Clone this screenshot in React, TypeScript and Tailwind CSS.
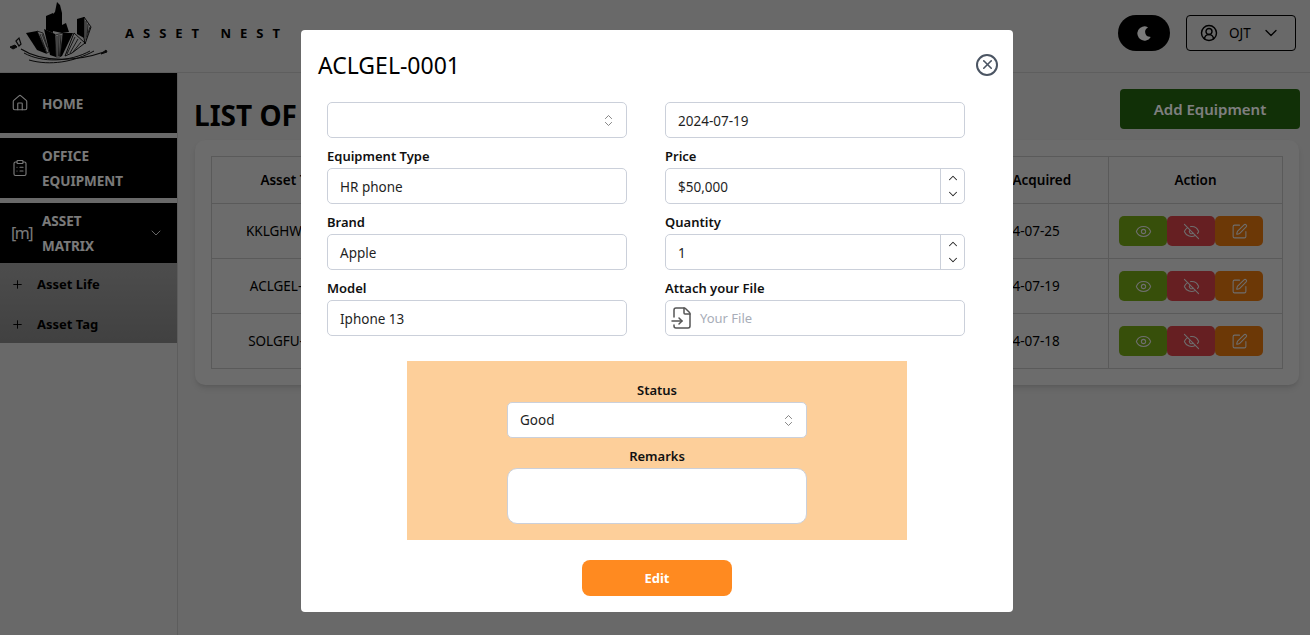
import {
  ChevronDown,
  ChevronUp,
  ChevronsUpDown,
  CircleUserRound,
  ClipboardList,
  Eye,
  EyeOff,
  FileInput,
  House,
  Moon,
  Plus,
  SquarePen,
  X,
} from 'lucide-react'

const rows = [
  { tag: 'KKLGHW-0001', date: '2024-07-25' },
  { tag: 'ACLGEL-0001', date: '2024-07-19' },
  { tag: 'SOLGFU-0001', date: '2024-07-18' },
]

function Logo() {
  return (
    <svg width="120" height="72" viewBox="0 0 120 72" className="shrink-0">
      {/* towers */}
      <path d="M53 31 L53 14 L55 12 L57 2 L60 5 L62 13 L62 33 Z" fill="#000" />
      <path d="M46 30 L46 16 L53 13 L53 33 Z" fill="#000" />
      <path d="M44 29 L55 34 L56 57 L50 55 Z" fill="#000" />
      <path d="M62 33 L62 25 L66 23 L69 32 Z" fill="#000" />
      <path d="M63 33 L73 33 L62 56 L60 57 Z" fill="#000" />
      <path d="M26 33 L37 31 L47 54 L37 50 Z" fill="#000" />
      <path d="M77 19 L84 17 L84 38 L77 34 Z" fill="#000" />
      {/* hatched faces */}
      <path d="M55 35 L63 33 L60 57 L56 57 Z" fill="none" stroke="#000" strokeWidth="0.6" />
      <path d="M57 36 L57 56 M59 35 L58.5 56 M61 35 L59.5 56" stroke="#000" strokeWidth="0.7" fill="none" />
      <path d="M84 17 L91 27 L85 44 L84 38 Z" fill="none" stroke="#000" strokeWidth="0.9" />
      <path d="M86 21 L86 40 M88 24 L87 37 M90 27 L88 33" stroke="#000" strokeWidth="0.7" fill="none" />
      <path d="M74 33 L85 43 L72 53 L65 56 Z" fill="none" stroke="#000" strokeWidth="0.9" />
      <path d="M75 37 L67 54 M78 39 L70 53 M81 42 L73 52" stroke="#000" strokeWidth="0.8" fill="none" />
      <path d="M37 31 L43 33 L49 52 L47 53 Z" fill="none" stroke="#000" strokeWidth="0.7" />
      <path d="M40 34 L46 50 M42 34 L47 47" stroke="#000" strokeWidth="0.6" fill="none" />
      {/* nest */}
      <path d="M21 49 C40 61 72 63 104 52" stroke="#111" strokeWidth="1.2" fill="none" />
      <path d="M24 53 C42 63 70 62 90 51" stroke="#111" strokeWidth="1" fill="none" />
      <path d="M29 60 C50 66 74 62 94 51" stroke="#111" strokeWidth="1" fill="none" />
      <path d="M101 54 L106 50 L107 52 Z" fill="#111" stroke="#111" />
      <path d="M10 47 L15 45 L17 47 L13 49 Z" fill="#111" stroke="#111" />
      <path d="M16 41 L19 38 L21 44 L19 46 Z" fill="none" stroke="#111" strokeWidth="1.2" />
    </svg>
  )
}

function Sidebar() {
  return (
    <aside className="w-[178px] shrink-0 border-r border-[#bbb] flex flex-col gap-[5px] text-[13.5px] font-bold">
      <div className="h-[60px] bg-black text-[#f4f4f4] flex items-center pl-[11px] gap-[13px]">
        <House size={18} strokeWidth={1.5} />
        <span className="pt-[2px]">HOME</span>
      </div>
      <div className="h-[60px] bg-black text-[#f4f4f4] flex items-center pl-[11px] gap-[13px]">
        <ClipboardList size={18} strokeWidth={1.5} />
        <span className="pt-[2px] leading-[25px]">OFFICE<br />EQUIPMENT</span>
      </div>
      <div>
        <div className="h-[60px] bg-black text-[#f4f4f4] flex items-center pl-[11px] gap-[13px]">
          <span className="w-[18px] text-[16px] font-normal tracking-[-1.5px] pb-[1px]">[m]</span>
          <span className="pt-[2px] leading-[25px]">ASSET<br />MATRIX</span>
          <ChevronDown size={16} strokeWidth={1.25} className="ml-[41px]" />
        </div>
        <div className="bg-gradient-to-b from-[#9a9a9a] to-[#828282] text-black text-[13px]">
          <div className="h-[40px] flex items-center pl-[11px] gap-[13px] pt-[3px]">
            <Plus size={13} strokeWidth={1.75} />
            <span>Asset Life</span>
          </div>
          <div className="h-[40px] flex items-center pl-[11px] gap-[13px] pt-[3px]">
            <Plus size={13} strokeWidth={1.75} />
            <span>Asset Tag</span>
          </div>
        </div>
      </div>
    </aside>
  )
}

function EquipmentTable() {
  return (
    <table className="w-full table-fixed border-collapse text-[13.5px] text-black">
      <thead>
        <tr className="h-[47px]">
          <th className="w-[160px] border border-[#b4b4b4] font-semibold">Asset Tag</th>
          <th className="border border-[#b4b4b4]"></th>
          <th className="border border-[#b4b4b4]"></th>
          <th className="border border-[#b4b4b4]"></th>
          <th className="w-[168px] border border-[#b4b4b4] font-semibold">Date Acquired</th>
          <th className="w-[174px] border border-[#b4b4b4] font-semibold">Action</th>
        </tr>
      </thead>
      <tbody>
        {rows.map((row) => (
          <tr key={row.tag} className="h-[55px] text-center">
            <td className="border border-[#b4b4b4]">{row.tag}</td>
            <td className="border border-[#b4b4b4]"></td>
            <td className="border border-[#b4b4b4]"></td>
            <td className="border border-[#b4b4b4]"></td>
            <td className="border border-[#b4b4b4]">{row.date}</td>
            <td className="border border-[#b4b4b4]">
              <div className="flex pl-[10px] text-[#dcdcdc]">
                <button className="w-[48px] h-[30px] rounded-[5px] bg-[#6f9f15] flex items-center justify-center">
                  <Eye size={17} strokeWidth={1.5} />
                </button>
                <button className="w-[48px] h-[30px] rounded-[5px] bg-[#cc3f45] flex items-center justify-center">
                  <EyeOff size={17} strokeWidth={1.5} />
                </button>
                <button className="w-[48px] h-[30px] rounded-[5px] bg-[#d9700c] flex items-center justify-center">
                  <SquarePen size={17} strokeWidth={1.5} />
                </button>
              </div>
            </td>
          </tr>
        ))}
      </tbody>
    </table>
  )
}

function Field({ label, children }: { label: string; children: React.ReactNode }) {
  return (
    <div className="w-[300px]">
      <div className="h-[30px] pt-[8px] text-[13px]/[20px] font-semibold text-[#111]">{label}</div>
      {children}
    </div>
  )
}

const box = 'w-full h-[36px] rounded-[5px] border border-[#cbd0da] bg-white flex items-center text-[13.5px] text-[#1f1f1f]'

function TextBox({ value }: { value: string }) {
  return (
    <div className={`${box} px-[12px]`}>
      <span className="pt-[2px]">{value}</span>
    </div>
  )
}

function SelectBox({ value }: { value?: string }) {
  return (
    <div className={`${box} pl-[12px] pr-[10px] justify-between`}>
      <span>{value}</span>
      <ChevronsUpDown size={15} strokeWidth={1.25} className="text-[#666]" />
    </div>
  )
}

function NumberBox({ value }: { value: string }) {
  return (
    <div className={box}>
      <span className="flex-1 pl-[12px] pt-[2px]">{value}</span>
      <div className="w-[24px] h-full border-l border-[#cbd0da] flex flex-col items-center justify-around py-[1px] text-[#222]">
        <ChevronUp size={14} strokeWidth={1.75} />
        <ChevronDown size={14} strokeWidth={1.75} />
      </div>
    </div>
  )
}

function Modal() {
  return (
    <div className="fixed inset-0 bg-black/50 flex justify-center pt-[30px] pl-[4px]">
      <div className="w-[712px] h-[582px] rounded-[4px] bg-white">
        <div className="h-[72px] pl-[17px] pr-[15px] flex items-center justify-between">
          <h2 className="text-[23px] text-black mb-[2px]">ACLGEL-0001</h2>
          <div className="size-[22px] rounded-full border-[2.5px] border-[#4b5563] flex items-center justify-center text-[#4b5563] mb-[3px]">
            <X size={15} strokeWidth={2.5} />
          </div>
        </div>
        <div className="flex gap-[38px] pl-[26px]">
          <div>
            <SelectBox />
            <Field label="Equipment Type"><TextBox value="HR phone" /></Field>
            <Field label="Brand"><TextBox value="Apple" /></Field>
            <Field label="Model"><TextBox value="Iphone 13" /></Field>
          </div>
          <div>
            <div className="w-[300px]"><TextBox value="2024-07-19" /></div>
            <Field label="Price"><NumberBox value="$50,000" /></Field>
            <Field label="Quantity"><NumberBox value="1" /></Field>
            <Field label="Attach your File">
              <div className={`${box} pl-[4px] gap-[6px]`}>
                <FileInput size={24} strokeWidth={1.5} className="text-[#555]" />
                <span className="pt-[2px] text-[13px] text-[#a8adb8]">Your File</span>
              </div>
            </Field>
          </div>
        </div>
        <div className="mt-[25px] mx-auto w-[500px] h-[179px] bg-[#fdcf9a] flex flex-col items-center">
          <div className="h-[41px] pt-[19px] text-[13px]/[20px] font-semibold text-[#111]">Status</div>
          <div className="w-[300px]"><SelectBox value="Good" /></div>
          <div className="h-[30px] pt-[8px] text-[13px]/[20px] font-semibold text-[#111]">Remarks</div>
          <textarea className="block w-[300px] h-[56px] rounded-[10px] border border-[#cbd0da] bg-white resize-none" />
        </div>
        <button className="block mt-[20px] mx-auto w-[150px] h-[36px] pt-[1px] rounded-[8px] bg-[#ff8a20] text-white text-[13px] font-bold">
          Edit
        </button>
      </div>
    </div>
  )
}

export default function App() {
  return (
    <div className="h-screen overflow-hidden bg-[#d2d2d2] font-['Noto_Sans',sans-serif] flex flex-col">
      <header className="h-[73px] shrink-0 border-b border-[#bdbdbd] flex items-center">
        <Logo />
        <span className="ml-[5px] text-[13px] font-bold tracking-[9px] text-black mb-[4px]">ASSET NEST</span>
        <div className="ml-auto mr-[14px] mb-[6px] flex items-center gap-[16px]">
          <div className="w-[52px] h-[36px] rounded-full bg-black flex items-center justify-center text-[#f4f4f4]">
            <Moon size={19} fill="currentColor" strokeWidth={0} className="rotate-[30deg]" />
          </div>
          <div className="w-[110px] h-[36px] rounded-[4px] border border-black flex items-center pl-[13px] text-[13.5px] text-black">
            <CircleUserRound size={18} strokeWidth={1.9} />
            <span className="ml-[11px]">OJT</span>
            <ChevronDown size={20} strokeWidth={1.5} className="ml-[10px]" />
          </div>
        </div>
      </header>
      <div className="flex-1 flex min-h-0">
        <Sidebar />
        <main className="flex-1 pl-[17px] pr-[10px]">
          <div className="h-[67px] flex items-start justify-between">
            <h1 className="mt-[22px] -ml-[1px] text-[28px]/[40px] font-bold text-black">LIST OF EQUIPMENT</h1>
            <button className="mt-[16px] w-[180px] h-[40px] rounded-[4px] bg-[#22600f] text-white text-[15px] font-semibold">
              Add Equipment
            </button>
          </div>
          <div className="mr-[1px] rounded-[10px] bg-[#d8d8d8] p-[16px] shadow-md">
            <EquipmentTable />
          </div>
        </main>
      </div>
      <Modal />
    </div>
  )
}
